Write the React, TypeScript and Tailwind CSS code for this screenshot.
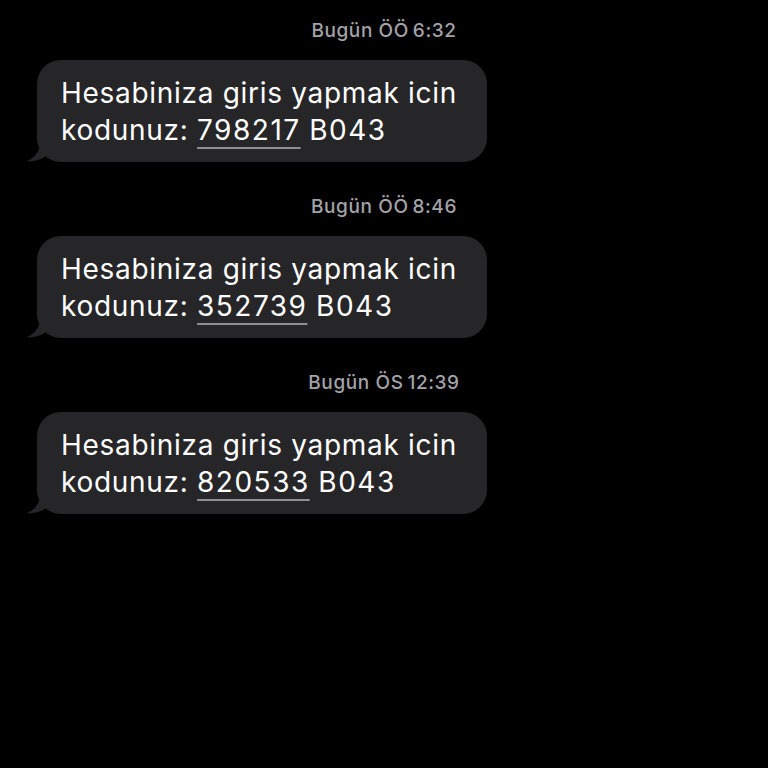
import React from 'react';

const messages = [
  { day: 'Bugün', time: 'ÖÖ\u20096:32', code: '798217' },
  { day: 'Bugün', time: 'ÖÖ\u20098:46', code: '352739' },
  { day: 'Bugün', time: 'ÖS\u200912:39', code: '820533' },
];

const Tail = () => (
  <svg
    className="absolute left-[-10px] bottom-0"
    width="24"
    height="22"
    viewBox="0 0 24 22"
    fill="#262628"
  >
    <path d="M14 0 C14 10 8 18 0 21 C8 22 16 19 22 14 L24 0 Z" />
  </svg>
);

const App: React.FC = () => {
  return (
    <div
      className="w-[768px] h-[768px] bg-black flex flex-col pt-[20px]"
      style={{ fontFamily: 'Inter, "Noto Sans", sans-serif' }}
    >
      {messages.map((m) => (
        <div key={m.code} className="flex flex-col h-[176px]">
          <div className="text-center text-[19px] leading-[22px] font-medium tracking-[0.6px] text-[#a3a3a8]">
            {m.day} {m.time}
          </div>
          <div className="relative ml-[37px] mt-[18px] w-[450px] rounded-[24px] bg-[#262628] pl-[24px] pr-[16px] pt-[15px] pb-[13px]">
            <Tail />
            <p className="relative text-[28px] leading-[37px] text-white tracking-[0.7px] whitespace-nowrap">
              Hesabiniza giris yapmak icin
              <br />
              kodunuz:{' '}
              <span className="tracking-[1.5px] underline decoration-[#8e8e93] decoration-[2px] underline-offset-[7px]">
                {m.code}
              </span>{' '}
              <span className="tracking-[1.5px]">B043</span>
            </p>
          </div>
        </div>
      ))}
    </div>
  );
};

export default App;
